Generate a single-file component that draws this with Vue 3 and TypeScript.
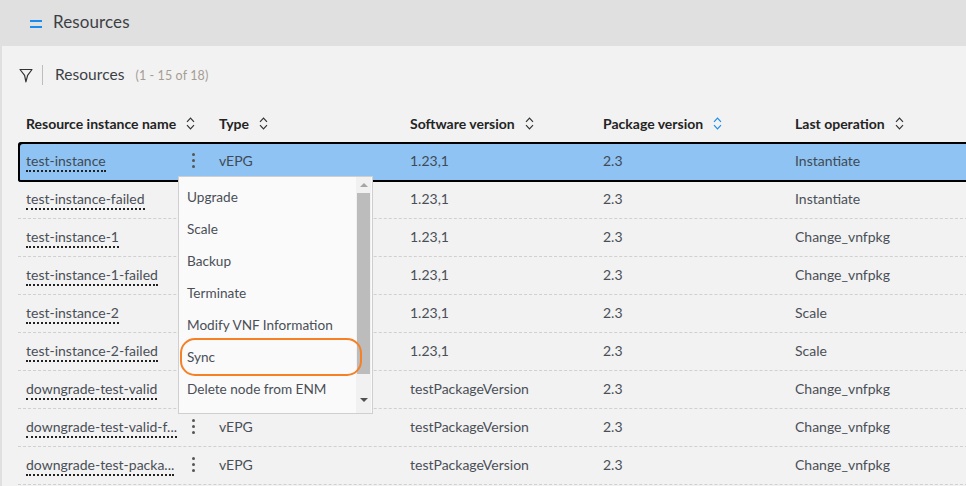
<script setup lang="ts">
interface Row { name: string; type: string; sw: string; op: string; dots: boolean }
const rows: Row[] = [
  { name: 'test-instance', type: 'vEPG', sw: '1.23,1', op: 'Instantiate', dots: true },
  { name: 'test-instance-failed', type: '', sw: '1.23,1', op: 'Instantiate', dots: false },
  { name: 'test-instance-1', type: '', sw: '1.23,1', op: 'Change_vnfpkg', dots: false },
  { name: 'test-instance-1-failed', type: '', sw: '1.23,1', op: 'Change_vnfpkg', dots: false },
  { name: 'test-instance-2', type: '', sw: '1.23,1', op: 'Scale', dots: false },
  { name: 'test-instance-2-failed', type: '', sw: '1.23,1', op: 'Scale', dots: false },
  { name: 'downgrade-test-valid', type: '', sw: 'testPackageVersion', op: 'Change_vnfpkg', dots: false },
  { name: 'downgrade-test-valid-f...', type: 'vEPG', sw: 'testPackageVersion', op: 'Change_vnfpkg', dots: true },
  { name: 'downgrade-test-packa...', type: 'vEPG', sw: 'testPackageVersion', op: 'Change_vnfpkg', dots: true },
]
const cols = [
  { label: 'Resource instance name', active: false },
  { label: 'Type', active: false },
  { label: 'Software version', active: false },
  { label: 'Package version', active: true },
  { label: 'Last operation', active: false },
]
const menu = ['Upgrade', 'Scale', 'Backup', 'Terminate', 'Modify VNF Information', 'Sync', 'Delete node from ENM']
</script>

<template>
  <div class="page">
    <header class="topbar">
      <span class="burger"><i></i><i></i></span>
      <span class="top-title">Resources</span>
    </header>
    <main class="content">
      <div class="toolbar">
        <svg class="filter" width="14" height="15" viewBox="0 0 14 15" fill="none" stroke="#333" stroke-width="1.2" stroke-linejoin="round">
          <path d="M1 1.5h12L8.6 7.4 6.9 13.8 5.6 7.4z" />
        </svg>
        <span class="divider"></span>
        <span class="title">Resources</span>
        <span class="count">(1 - 15 of 18)</span>
      </div>
      <div class="table">
        <div class="row head">
          <div v-for="c in cols" :key="c.label" class="cell th">
            <span>{{ c.label }}</span>
            <svg width="9" height="13" viewBox="0 0 9 13" fill="none" :stroke="c.active ? '#1a8cf0' : '#333'" stroke-width="1.2">
              <path d="M1 4.8 4.5 1.2 8 4.8M1 8.2l3.5 3.6L8 8.2" />
            </svg>
          </div>
        </div>
        <div v-for="(r, i) in rows" :key="r.name" class="row body" :class="{ selected: i === 0 }">
          <div class="cell first">
            <span class="link">{{ r.name }}</span>
            <span v-if="r.dots" class="dots"><i></i><i></i><i></i></span>
          </div>
          <div class="cell">{{ r.type }}</div>
          <div class="cell">{{ r.sw }}</div>
          <div class="cell">2.3</div>
          <div class="cell">{{ r.op }}</div>
        </div>
        <div class="menu">
          <ul class="items">
            <li v-for="m in menu" :key="m">{{ m }}</li>
          </ul>
          <div class="scroll">
            <span class="arrow up"></span>
            <span class="thumb"></span>
            <span class="arrow down"></span>
          </div>
          <span class="ring"></span>
        </div>
      </div>
    </main>
  </div>
</template>

<style>
html, body { margin: 0; background: #f2f2f2; overflow: hidden; }
</style>

<style scoped>
.page {
  width: 966px; height: 486px; overflow: hidden; background: #e0e0e0;
  font-family: Lato, "Open Sans", sans-serif; color: #4a4f57; font-size: 14px;
}
.topbar { height: 46px; display: flex; align-items: center; padding-left: 30px; box-sizing: border-box; }
.burger { display: flex; flex-direction: column; gap: 4px; width: 12px; margin-right: 11px; margin-top: 1px; }
.burger i { display: block; height: 2px; background: #1a8cf0; }
.top-title { font-size: 17px; color: #3c3f45; letter-spacing: .1px; margin-top: -3px; }
.content { margin-left: 2px; background: #f2f2f2; height: 440px; padding: 0 0 0 16px; box-sizing: border-box; }
.toolbar { height: 58px; display: flex; align-items: center; box-sizing: border-box; }
.filter { margin-left: 1px; margin-top: 1px; }
.divider { width: 1px; height: 20px; background: #bdbdbd; margin: 0 12px 0 9px; }
.title { font-size: 15.5px; color: #3c3f45; letter-spacing: .05px; margin-top: -2px; }
.count { font-size: 12.5px; color: #a59d92; margin-left: 11px; letter-spacing: .1px; }
.table { position: relative; width: 980px; }
.row { display: grid; grid-template-columns: 193px 191px 193px 192px 192px; }
.head { height: 38px; align-items: center; box-sizing: border-box; }
.cell { padding-left: 8px; display: flex; align-items: center; white-space: nowrap; min-width: 0; }
.th { font-weight: 700; color: #242424; font-size: 14px; gap: 10px; }
.body { height: 38px; padding-bottom: 2px; border-bottom: 1px dashed #d0d0d0; box-sizing: border-box; }
.selected {
  background: #8fc3f3; box-shadow: inset 2px 2px 0 #000, inset 0 -2px 0 #000; border-bottom: none;
  border-radius: 3px 0 0 3px; height: 40px; padding-bottom: 3px; margin-bottom: -1px; color: #3f4a55;
}
.first { justify-content: space-between; padding-right: 16px; }
.link { border-bottom: 2px dotted #222; line-height: 17px; padding-bottom: 1px; margin-top: 2px; }
.dots { display: flex; flex-direction: column; gap: 2.5px; }
.dots i { width: 3.5px; height: 3.5px; border-radius: 50%; background: #555; display: block; }
.menu {
  position: absolute; left: 160px; top: 72px; width: 195px; height: 238px; box-sizing: border-box;
  background: #fafafa; border: 1px solid #cfcfcf; display: flex;
}
.items { list-style: none; margin: 0; padding: 4px 0 0; flex: 1; font-size: 13.6px; }
.items li { height: 32px; line-height: 32px; padding-left: 8px; color: #4a4f57; white-space: nowrap; }
.scroll { width: 15px; background: #f1f1f1; display: flex; flex-direction: column; align-items: center; margin-right: 1px; }
.thumb { width: 13px; height: 181px; background: #bcbcbc; }
.arrow { width: 0; height: 0; border-left: 4px solid transparent; border-right: 4px solid transparent; }
.arrow.up { border-bottom: 4px solid #a5a5a5; margin: 6px 0 6px; }
.arrow.down { border-top: 4px solid #505050; margin-top: 24px; }
.ring {
  position: absolute; left: 1px; top: 161px; width: 182px; height: 38px; box-sizing: border-box;
  border: 2px solid #f58025; border-radius: 15px; pointer-events: none;
}
</style>
